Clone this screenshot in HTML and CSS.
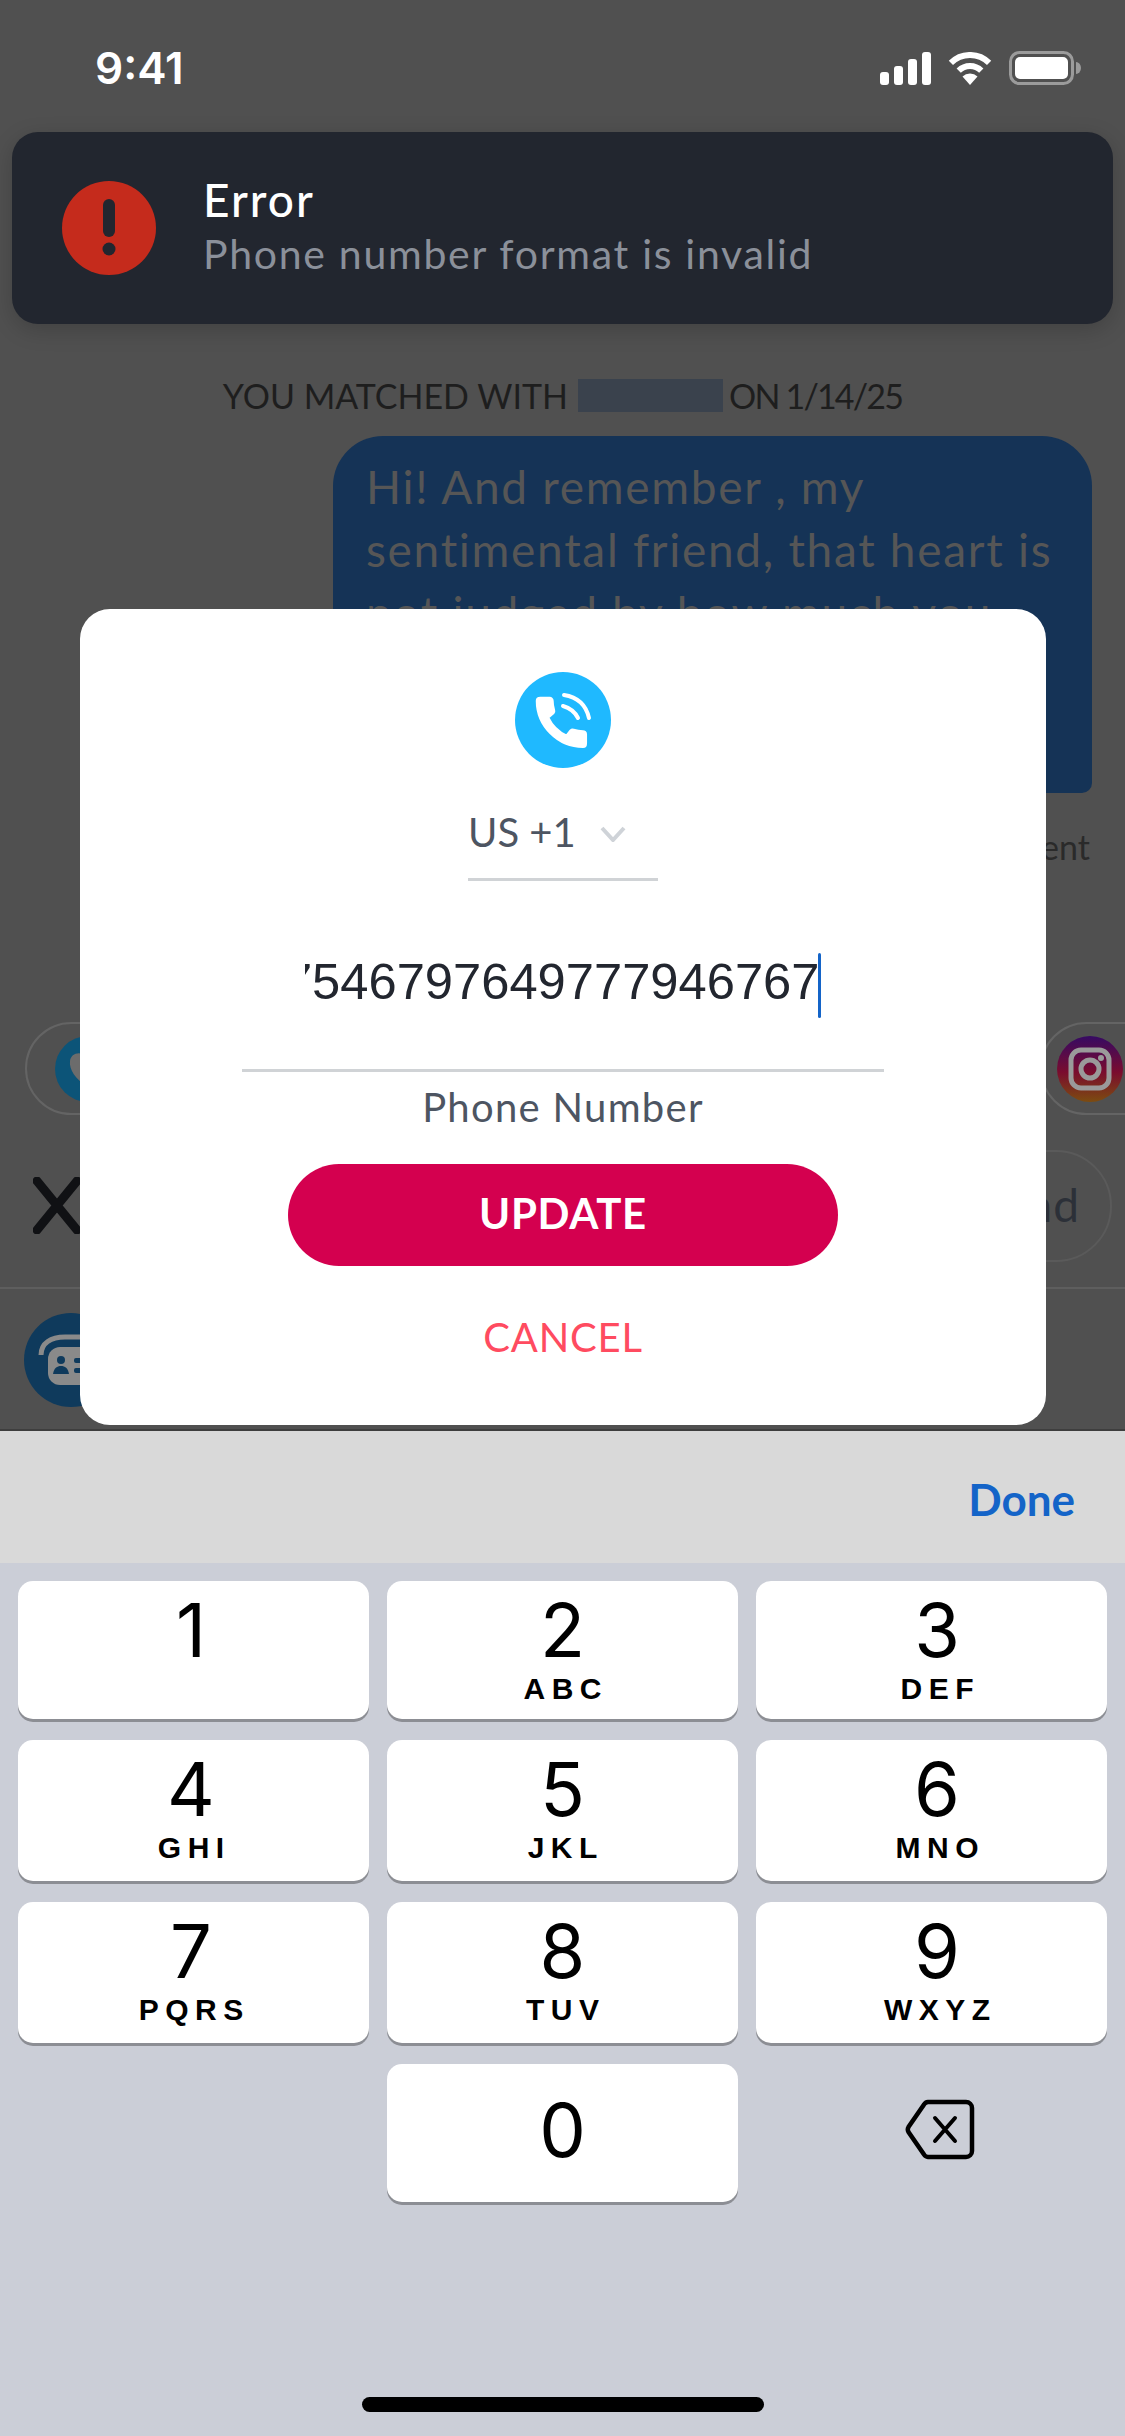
FILE: index.html
```html
<!DOCTYPE html>
<html lang="en">
<head>
<meta charset="utf-8">
<title>Update phone number</title>
<link rel="stylesheet" href="styles.css">
</head>
<body>
<div class="screen">
  <main class="chat">
    <div class="status">
      <span class="time">9:41</span>
      <div class="status-icons">
        <svg class="signal" width="51" height="33" viewBox="0 0 51 33" fill="#fff"><rect x="0" y="20" width="9" height="13" rx="3"/><rect x="14" y="14" width="9" height="19" rx="3"/><rect x="28" y="7" width="9" height="26" rx="3"/><rect x="42" y="0" width="9" height="33" rx="3"/></svg>
        <svg class="wifi" width="46" height="33" viewBox="0 0 46 33"><path d="M3.900 10.900A27 27 0 0 1 42.100 10.900M11.700 18.700A16 16 0 0 1 34.300 18.700" fill="none" stroke="#fff" stroke-width="6"/><path d="M23 33L15.500 24.500A11 11 0 0 1 30.500 24.500Z" fill="#fff"/></svg>
        <svg class="battery" width="72" height="34" viewBox="0 0 72 34"><rect x="1.500" y="1.500" width="62" height="31" rx="9" fill="none" stroke="#9b9b9b" stroke-width="3"/><rect x="6" y="6" width="53" height="22" rx="5" fill="#fff"/><path d="M67 11a5 6 0 0 1 0 12z" fill="#9b9b9b"/></svg>
      </div>
    </div>
    <div class="matched"><span>YOU MATCHED WITH</span><span class="redact"></span><span class="match-date">ON 1/14/25</span></div>
    <div class="bubble">Hi! And remember , my<br>sentimental friend, that heart is<br>not judged by how much you<br>love, but by how much you<br>are loved by others.</div>
    <div class="sent">Sent</div>
    <div class="chips">
      <div class="chip chip-left">
        <svg width="66" height="66" viewBox="0 0 66 66"><circle cx="33" cy="33" r="33" fill="#0c5478"/><path d="M33 52C20 42 14 34 15 25c1-8 11-11 18-3 7-8 17-5 18 3 1 9-5 17-18 27z" fill="#6c6c6c"/></svg>
      </div>
      <div class="chip chip-right">
        <svg width="66" height="66" viewBox="0 0 66 66"><defs><linearGradient id="ig" x1="0" y1="0" x2="0" y2="1"><stop offset="0" stop-color="#360a63"/><stop offset=".55" stop-color="#7a0c2e"/><stop offset="1" stop-color="#7c4c10"/></linearGradient></defs><circle cx="33" cy="33" r="33" fill="url(#ig)"/><rect x="14" y="14" width="38" height="38" rx="10" fill="none" stroke="#9a9a9a" stroke-width="5"/><circle cx="33" cy="33" r="9" fill="none" stroke="#9a9a9a" stroke-width="5"/><circle cx="44" cy="22" r="3" fill="#9a9a9a"/></svg>
      </div>
    </div>
    <div class="composer">
      <svg class="close" width="48" height="57" viewBox="0 0 48 57"><path d="M4 4L44 53M44 4L4 53" fill="none" stroke="#101114" stroke-width="9" stroke-linecap="round"/></svg>
      <div class="send">Send</div>
    </div>
    <div class="footer">
      <svg width="94" height="94" viewBox="0 0 94 94"><circle cx="47" cy="47" r="47" fill="#0f3a5c"/><path d="M17 42c0-12 10-18 24-18h20" fill="none" stroke="#8a8a8a" stroke-width="5"/><rect x="24" y="34" width="56" height="38" rx="12" fill="#8a8a8a"/><circle cx="37" cy="47" r="4" fill="#0f3a5c"/><path d="M29 61c1-6 4-8 8-8s7 2 8 8z" fill="#0f3a5c"/><rect x="50" y="45" width="16" height="5" rx="2" fill="#0f3a5c"/><rect x="50" y="55" width="16" height="5" rx="2" fill="#0f3a5c"/></svg>
    </div>
  </main>

  <section class="keyboard">
    <div class="toolbar"><span class="done">Done</span></div>
    <div class="keypad">
      <div class="key"><span class="digit">1</span></div>
      <div class="key"><span class="digit">2</span><span class="letters">ABC</span></div>
      <div class="key"><span class="digit">3</span><span class="letters">DEF</span></div>
      <div class="key"><span class="digit">4</span><span class="letters">GHI</span></div>
      <div class="key"><span class="digit">5</span><span class="letters">JKL</span></div>
      <div class="key"><span class="digit">6</span><span class="letters">MNO</span></div>
      <div class="key"><span class="digit">7</span><span class="letters">PQRS</span></div>
      <div class="key"><span class="digit">8</span><span class="letters">TUV</span></div>
      <div class="key"><span class="digit">9</span><span class="letters">WXYZ</span></div>
      <div class="key key-zero"><span class="digit">0</span></div>
      <div class="backspace">
        <svg width="70" height="61" viewBox="0 0 70 61"><path d="M23 3H61a6 6 0 0 1 6 6V52a6 6 0 0 1-6 6H23a5 5 0 0 1-4-2.500L3.500 33a5 5 0 0 1 0-5L19 5.500A5 5 0 0 1 23 3Z" fill="none" stroke="#000" stroke-width="4.500"/><path d="M30 19L50 42M50 19L30 42" fill="none" stroke="#000" stroke-width="4" stroke-linecap="round"/></svg>
      </div>
    </div>
    <div class="home"></div>
  </section>

  <div class="toast">
    <svg width="94" height="94" viewBox="0 0 94 94"><circle cx="47" cy="47" r="47" fill="#c52b1c"/><rect x="41" y="18" width="12" height="38" rx="6" fill="#22262f"/><circle cx="47" cy="68" r="6.500" fill="#22262f"/></svg>
    <div class="toast-text">
      <div class="toast-title">Error</div>
      <div class="toast-sub">Phone number format is invalid</div>
    </div>
  </div>

  <div class="modal">
    <svg class="call" width="96" height="96" viewBox="0 0 96 96"><circle cx="48" cy="48" r="48" fill="#1fb9ff"/><path transform="translate(14 18) scale(2.700)" d="M20.010 15.380c-1.230 0-2.420-.2-3.530-.56a.977.977 0 0 0-1.010.24l-1.570 1.970c-2.830-1.350-5.480-3.900-6.890-6.830l1.950-1.660c.27-.28.35-.67.24-1.020-.37-1.110-.56-2.300-.56-3.530 0-.54-.45-.99-.99-.99H4.190C3.650 3 3 3.240 3 3.990 3 13.280 10.730 21 20.010 21c.71 0 .99-.63.99-1.180v-3.450c0-.54-.45-.99-.99-.99z" fill="#fff" stroke="#fff" stroke-width="1" stroke-linejoin="round"/><path d="M49 23C62 25 71 33 74 46M48 34C55 36 60 40 63 46" fill="none" stroke="#fff" stroke-width="4" stroke-linecap="round"/></svg>
    <div class="country">
      <span>US +1</span>
      <svg width="26" height="16" viewBox="0 0 26 16"><path d="M2 2L13 14L24 2" fill="none" stroke="#cfd3d8" stroke-width="4"/></svg>
    </div>
    <div class="phone-field">
      <div class="phone-value"><span>7546797649777946767</span></div>
      <span class="caret"></span>
    </div>
    <div class="phone-label">Phone Number</div>
    <div class="update">UPDATE</div>
    <div class="cancel">CANCEL</div>
  </div>
</div>
</body>
</html>
```

FILE: styles.css
```css
* { box-sizing: border-box; }
html, body { margin: 0; padding: 0; }
body { width: 1125px; height: 2436px; overflow: hidden; font-family: "Lato", "Liberation Sans", sans-serif; }

.screen { position: relative; width: 1125px; height: 2436px; display: flex; flex-direction: column; overflow: hidden; }

/* dimmed chat behind the dialog */
.chat { height: 1431px; flex: none; background: #505050; border-bottom: 2px solid #3e3e3e; overflow: hidden; display: flex; flex-direction: column; }
.status { height: 132px; flex: none; display: flex; justify-content: space-between; padding: 52px 44px 0 95px; }
.time { font: 600 44px/33px "Inter", sans-serif; color: #fff; height: 33px; }
.status-icons { display: flex; align-items: flex-start; gap: 16px; }
.battery { margin-top: -1px; }

.matched { margin-top: 247px; height: 33px; display: flex; justify-content: center; align-items: center; font-size: 34px; color: #1e1e1e; flex: none; }
.redact { width: 145px; height: 33px; background: #3a424d; margin: 0 6px 0 10px; }
.match-date { letter-spacing: -1.8px; }

.bubble { margin: 24px 33px 0 auto; width: 759px; height: 357px; flex: none; padding: 19px 10px 0 33px; background: #153356; border-radius: 50px 50px 10px 50px; color: #565656; font-size: 46px; line-height: 63px; letter-spacing: 1.7px; white-space: nowrap; overflow: hidden; }

.sent { margin-top: 34px; height: 40px; flex: none; text-align: right; padding-right: 35px; font-size: 34px; line-height: 40px; color: #2a2a2a; }

.chips { margin-top: 155px; height: 93px; flex: none; display: flex; justify-content: space-between; padding-left: 25px; }
.chip { height: 93px; border: 2px solid #646464; border-radius: 47px; display: flex; align-items: center; }
.chip-left { width: 330px; padding-left: 28px; }
.chip-right { width: 185px; padding-left: 15px; margin-right: -100px; }

.composer { margin-top: 35px; height: 112px; flex: none; display: flex; align-items: center; justify-content: space-between; padding: 0 13px 0 33px; }
.close { flex: none; margin-top: -1px; }
.send { width: 900px; height: 112px; border: 2px solid #5a5a5a; border-radius: 56px; text-align: right; padding-right: 30px; font-size: 46px; letter-spacing: 1px; line-height: 106px; color: #2c3038; }

.footer { margin-top: 25px; flex: 1; border-top: 2px solid #5e5e5e; padding: 24px 0 0 24px; }

/* keyboard */
.keyboard { flex: 1; background: #cbced7; display: flex; flex-direction: column; }
.toolbar { height: 132px; flex: none; background: #d9d9d9; display: flex; align-items: center; justify-content: flex-end; padding: 4px 50px 0 0; }
.done { font-size: 44px; font-weight: 700; color: #1464c8; }
.keypad { display: grid; grid-template-columns: repeat(3, 351px); grid-template-rows: 138px 141px 141px 138px; column-gap: 18px; row-gap: 21px; padding: 18px 18px 0; flex: none; }
.key { background: #fff; border-radius: 15px; box-shadow: 0 3px 0 #8c8e94; display: flex; flex-direction: column; align-items: center; padding-top: 11px; }
.key:nth-child(3n+1) { padding-right: 5px; }
.key:nth-child(3n) { padding-left: 11px; }
.key.key-zero { grid-column: 2; justify-content: center; padding: 0 0 6px; }
.digit { font: 400 74px/76px "Inter", sans-serif; color: #000; }
.letters { font: 700 30px/30px "Liberation Sans", sans-serif; letter-spacing: 6.500px; margin-right: -6.500px; color: #000; margin-top: 6px; }
.backspace { display: flex; align-items: center; justify-content: center; padding: 0 0 7px 16px; }
.home { width: 402px; height: 15px; border-radius: 8px; background: #000; align-self: center; margin-top: auto; margin-bottom: 24px; }

/* toast */
.toast { position: absolute; left: 12px; top: 132px; width: 1101px; height: 192px; background: #22262f; border-radius: 26px; box-shadow: 0 6px 22px rgba(0,0,0,.18); display: flex; align-items: center; padding-left: 50px; gap: 47px; }
.toast-text { display: flex; flex-direction: column; margin-top: -2px; }
.toast-title { font-size: 46px; line-height: 54px; font-weight: 500; letter-spacing: 2px; color: #fff; }
.toast-sub { font-size: 41px; line-height: 54px; letter-spacing: 1.700px; color: #8b909a; }

/* dialog */
.modal { position: absolute; left: 80px; top: 609px; width: 966px; height: 816px; background: #fff; border-radius: 30px; display: flex; flex-direction: column; align-items: center; padding-top: 63px; }
.call { flex: none; }
.country { margin-top: 36px; width: 190px; height: 77px; border-bottom: 3px solid #d0d3d6; display: flex; align-items: flex-start; gap: 24px; padding-top: 6px; font-size: 40px; line-height: 44px; color: #4d5562; }
.country svg { margin-top: 16px; }
.phone-field { margin-top: 72px; width: 513px; height: 65px; position: relative; display: flex; align-items: flex-start; justify-content: flex-end; }
.phone-value { width: 515px; flex: none; overflow: hidden; display: flex; justify-content: flex-end; font: 400 50.700px/58px "Liberation Sans", sans-serif; color: #22262f; white-space: nowrap; }
.caret { position: absolute; right: -1px; top: 0; width: 3px; height: 65px; background: #1464c8; border-radius: 2px; }
.phone-label { margin-top: 51px; width: 642px; border-top: 3px solid #d0d3d6; padding-top: 12px; text-align: center; font-size: 40px; line-height: 46px; letter-spacing: 1.300px; color: #4d5562; }
.update { margin-top: 34px; width: 550px; height: 102px; border-radius: 51px; background: #d4004f; color: #fff; text-align: center; font-size: 42px; font-weight: 700; letter-spacing: .7px; line-height: 98px; }
.cancel { margin-top: 47px; font-size: 40px; line-height: 48px; letter-spacing: .8px; color: #ff4b60; }
```
